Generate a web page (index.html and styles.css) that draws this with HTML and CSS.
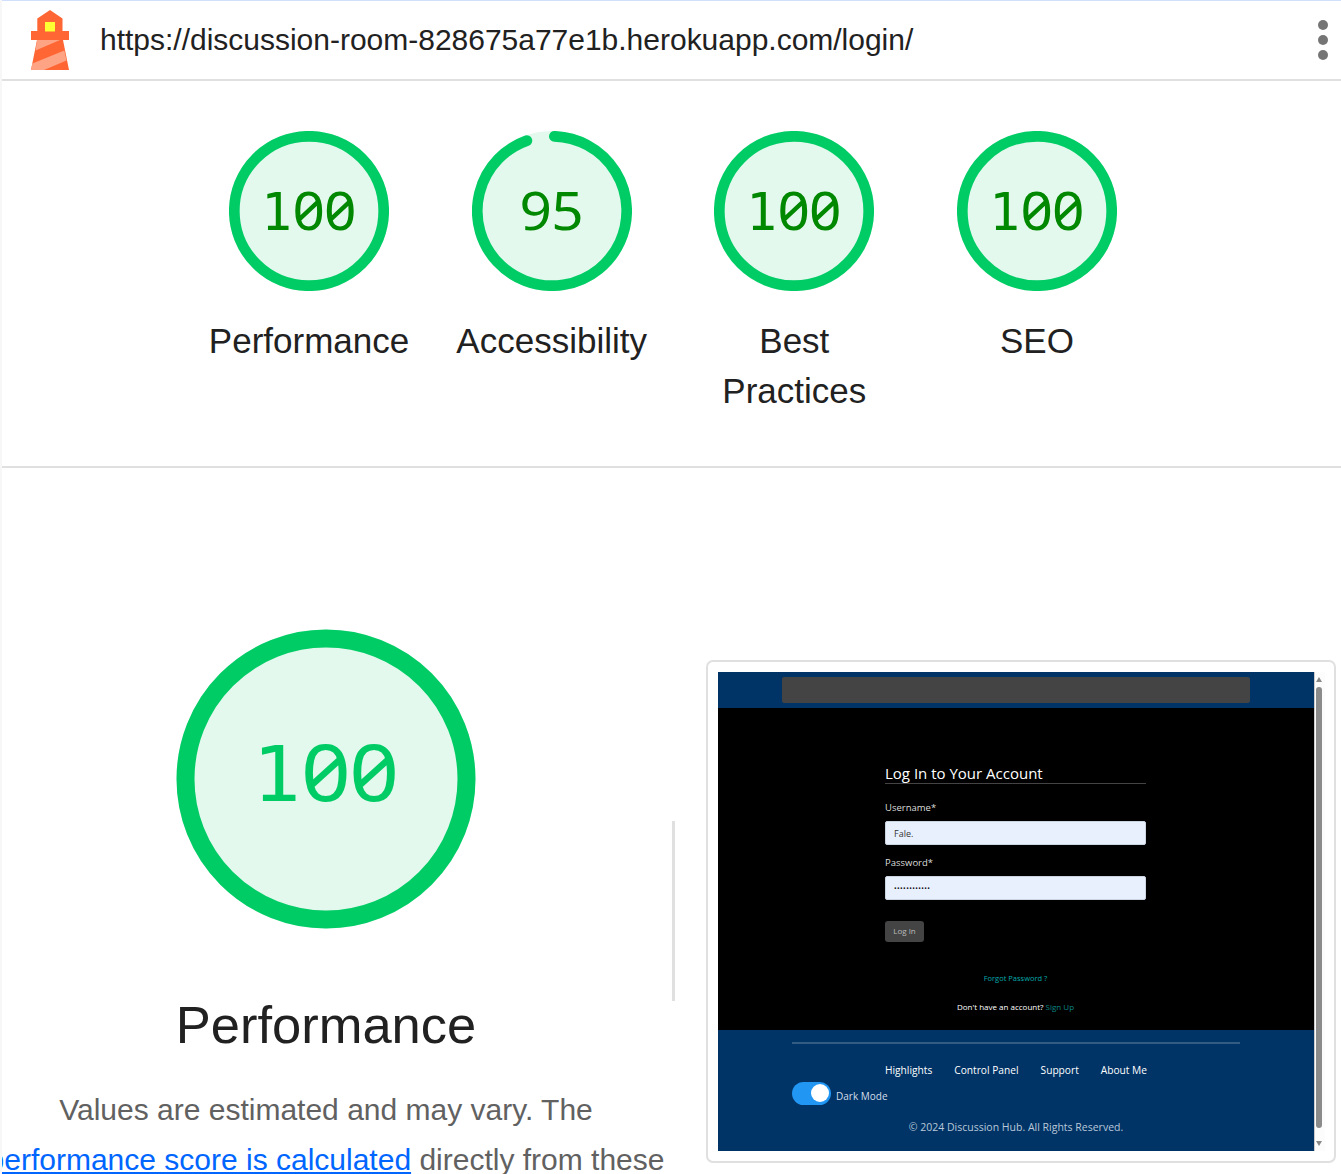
FILE: index.html
```html
<!DOCTYPE html>
<html lang="en">
<head>
<meta charset="utf-8">
<title>Lighthouse Report</title>
<link rel="stylesheet" href="styles.css">
</head>
<body>
<header class="topbar">
  <svg class="logo" width="38" height="60" viewBox="0 0 38 60">
    <path fill="#ff6633" d="M19 0 31.500 8.500V21H38V30H32L38 60H0L6 30H0V21H6.300V8.500z"/>
    <path fill="#ffa385" d="M6 30H29L4.600 40.500zM33.300 40.500 35.500 50.500 13 60H0L1.400 53.500z"/>
    <path fill="#ffff33" d="M14 12h10v9.500H14z"/>
  </svg>
  <span class="url">https://discussion-room-828675a77e1b.herokuapp.com/login/</span>
  <svg class="menu" width="10" height="40" viewBox="0 0 10 40"><circle cx="5" cy="5" r="5"/><circle cx="5" cy="20" r="5"/><circle cx="5" cy="35" r="5"/></svg>
</header>
<section class="scores">
  <div class="score">
    <svg class="gauge" width="160" height="160" viewBox="0 0 160 160"><circle class="base" cx="80" cy="80" r="80"/><circle class="arc" cx="80" cy="80" r="74.700"/><text class="num one" x="47.500" y="99">1</text><text class="num" x="81 110.100" y="99">00</text></svg>
    <span>Performance</span>
  </div>
  <div class="score">
    <svg class="gauge" width="160" height="160" viewBox="0 0 160 160"><circle class="base" cx="80" cy="80" r="80"/><path class="arc" d="M82.300 5.300A74.700 74.700 0 1 1 54.900 9.600"/><text class="num" x="65 94.300" y="99">95</text></svg>
    <span>Accessibility</span>
  </div>
  <div class="score">
    <svg class="gauge" width="160" height="160" viewBox="0 0 160 160"><circle class="base" cx="80" cy="80" r="80"/><circle class="arc" cx="80" cy="80" r="74.700"/><text class="num one" x="47.500" y="99">1</text><text class="num" x="81 110.100" y="99">00</text></svg>
    <span>Best<br>Practices</span>
  </div>
  <div class="score">
    <svg class="gauge" width="160" height="160" viewBox="0 0 160 160"><circle class="base" cx="80" cy="80" r="80"/><circle class="arc" cx="80" cy="80" r="74.700"/><text class="num one" x="47.500" y="99">1</text><text class="num" x="81 110.100" y="99">00</text></svg>
    <span>SEO</span>
  </div>
</section>
<main class="category">
  <div class="summary">
    <svg class="gauge big" width="300" height="300" viewBox="0 0 300 300"><circle class="base" cx="150" cy="150" r="149.500"/><circle class="arc" cx="150" cy="150" r="140.500"/><text class="num one" x="100.500" y="172">1</text><text class="num" x="152 195.900" y="172">00</text></svg>
    <h1>Performance</h1>
    <p><span class="line first">Values are estimated and may vary. The</span><span class="line"><a href="#">performance score is calculated</a> directly from these</span></p>
  </div>
  <div class="separator"></div>
  <div class="frame">
    <div class="shot">
      <div class="page">
        <div class="nav"><div class="blank"></div></div>
        <div class="login">
          <h2><span>Log In to Your Account</span></h2>
          <label class="user">Username*</label>
          <div class="field">Fale.</div>
          <label class="pass">Password*</label>
          <div class="field dots">••••••••••••</div>
          <div class="button">Log In</div>
          <div class="forgot">Forgot Password ?</div>
          <div class="signup">Don't have an account? <b>Sign Up</b></div>
        </div>
        <div class="foot">
          <div class="rule"></div>
          <div class="links"><span>Highlights</span><span>Control Panel</span><span>Support</span><span>About Me</span></div>
          <div class="mode"><i class="toggle"></i><span>Dark Mode</span></div>
          <div class="copy">© 2024 Discussion Hub. All Rights Reserved.</div>
        </div>
      </div>
      <div class="scrollbar"><i class="up"></i><i class="thumb"></i><i class="down"></i></div>
    </div>
  </div>
</main>
</body>
</html>
```
FILE: styles.css
```css
* { box-sizing: border-box; }
body {
  margin: 0;
  width: 1341px;
  height: 1174px;
  overflow: hidden;
  border-left: 2px solid #f7f7f7;
  background: #fff;
  color: #212121;
  font-family: "Liberation Sans", Arial, sans-serif;
}
.topbar {
  display: flex;
  align-items: center;
  height: 81px;
  padding: 0 13px 0 29px;
  border-top: 1px solid #cfdffc;
  border-bottom: 2px solid #e0e0e0;
}
.logo { flex: none; margin-bottom: 1px; }
.url { margin-left: 31px; font-size: 30px; letter-spacing: -0.01px; white-space: nowrap; }
.menu { margin-left: auto; margin-bottom: 1px; fill: #757575; }
.scores {
  display: grid;
  grid-template-columns: repeat(4, 242.67px);
  height: 387px;
  padding: 50px 0 0 185.7px;
  border-bottom: 2px solid #e0e0e0;
}
.score {
  display: flex;
  flex-direction: column;
  align-items: center;
  gap: 25px;
  font-size: 35px;
  line-height: 50px;
  text-align: center;
}
.gauge { display: block; flex: none; }
.base { fill: #e3f9ed; }
.arc { fill: none; stroke: #00cc66; stroke-width: 10.7px; stroke-linecap: round; }
.num {
  fill: #080;
  font-family: "Noto Sans", sans-serif;
  font-size: 52.500px;
  font-feature-settings: "zero" 1;
  text-anchor: middle;
  transform: scaleX(1.08);
  transform-box: fill-box;
  transform-origin: center;
}
.one { font-family: "DejaVu Sans Mono", monospace; font-size: 51px; transform: none; }
.big .arc { stroke-width: 18px; }
.big .num { fill: #00cc66; font-size: 79px; transform: scaleX(1.1); }
.big .one { font-size: 77px; transform: scaleX(1.05); }
.category { display: flex; height: 706px; overflow: hidden; }
.summary {
  display: flex;
  flex: none;
  flex-direction: column;
  align-items: center;
  width: 648px;
  padding-top: 161px;
}
h1 { margin: 66px 0 0; font-size: 52.500px; font-weight: 400; line-height: 60px; }
.summary p { margin: 30px 0 0; color: #616161; font-size: 30px; line-height: 50px; }
.line { display: block; text-align: center; white-space: nowrap; }
.line a { color: #06f; text-decoration: underline; text-decoration-thickness: 2px; text-underline-offset: 2px; }
.separator { width: 3px; height: 180px; margin: 353px 0 0 22px; background: #e0e0e0; }
.frame {
  width: 630px;
  height: 503px;
  margin: 192px 0 0 31px;
  padding: 10px;
  border: 2px solid #e0e0e0;
  border-radius: 7px;
}
.shot {
  display: flex;
  width: 607px;
  height: 479px;
  color: #fff;
  font-family: "Open Sans", "Noto Sans", sans-serif;
  font-size: 9px;
  line-height: 12px;
}
.page { width: 596px; }
.nav { height: 36px; padding: 5px 64px; background: #036; }
.blank { height: 26px; border-radius: 2px; background: #444; }
.login { height: 322px; padding: 55px 168px 0 167px; background: #000; }
.login h2 { height: 21px; margin: 0; border-bottom: 1px solid #444; font-size: 15px; font-weight: 400; line-height: 21px; white-space: nowrap; }
.login label { display: block; height: 12px; color: #ddd; font-size: 9.500px; }
.user { margin: 18px 0 7px; }
.pass { margin: 12px 0 7px; }
.field { height: 24px; padding: 0 8px; border: 1px solid #cbd5e2; border-radius: 2px; background: #e8f0fe; color: #333; line-height: 24px; }
.dots { color: #111; font-size: 7px; letter-spacing: 0.4px; }
.button { width: 39px; height: 21px; margin-top: 21px; border-radius: 3px; background: #444; color: #bbb; font-size: 8px; line-height: 20px; text-align: center; }
.forgot { margin-top: 30px; color: #0aa; font-size: 7.500px; text-align: center; }
.signup { margin-top: 17px; font-size: 8px; text-align: center; white-space: nowrap; }
.signup b { color: #0b8585; font-weight: 400; }
.foot { height: 121px; padding-top: 12px; background: #036; }
.rule { height: 2px; margin: 0 74px; background: #335c85; }
.links { display: flex; justify-content: space-between; margin: 20px 167px 0; font-size: 10.200px; white-space: nowrap; }
.mode { display: flex; gap: 5px; height: 23px; margin: 6px 0 0 74px; color: #d5deea; font-size: 10px; line-height: 29px; }
.toggle { width: 39px; height: 23px; padding: 2px 2px 2px 19px; border-radius: 12px; background: #2196f3; }
.toggle::after { content: ""; display: block; width: 18px; height: 18px; border-radius: 50%; background: #fff; }
.copy { margin-top: 16px; color: #b9c8d8; font-size: 10.500px; text-align: center; white-space: nowrap; }
.scrollbar { display: flex; flex-direction: column; align-items: center; width: 11px; padding-right: 2px; border-left: 1px solid #ccc; background: #fcfcfc; }
.up { margin-top: 5px; border: 3px solid transparent; border-top: 0; border-bottom: 5px solid #888; }
.thumb { width: 6px; height: 441px; margin-top: 5px; border-radius: 3px; background: #8b8b8b; }
.down { margin-top: 13px; border: 3px solid transparent; border-bottom: 0; border-top: 5px solid #888; }
```
